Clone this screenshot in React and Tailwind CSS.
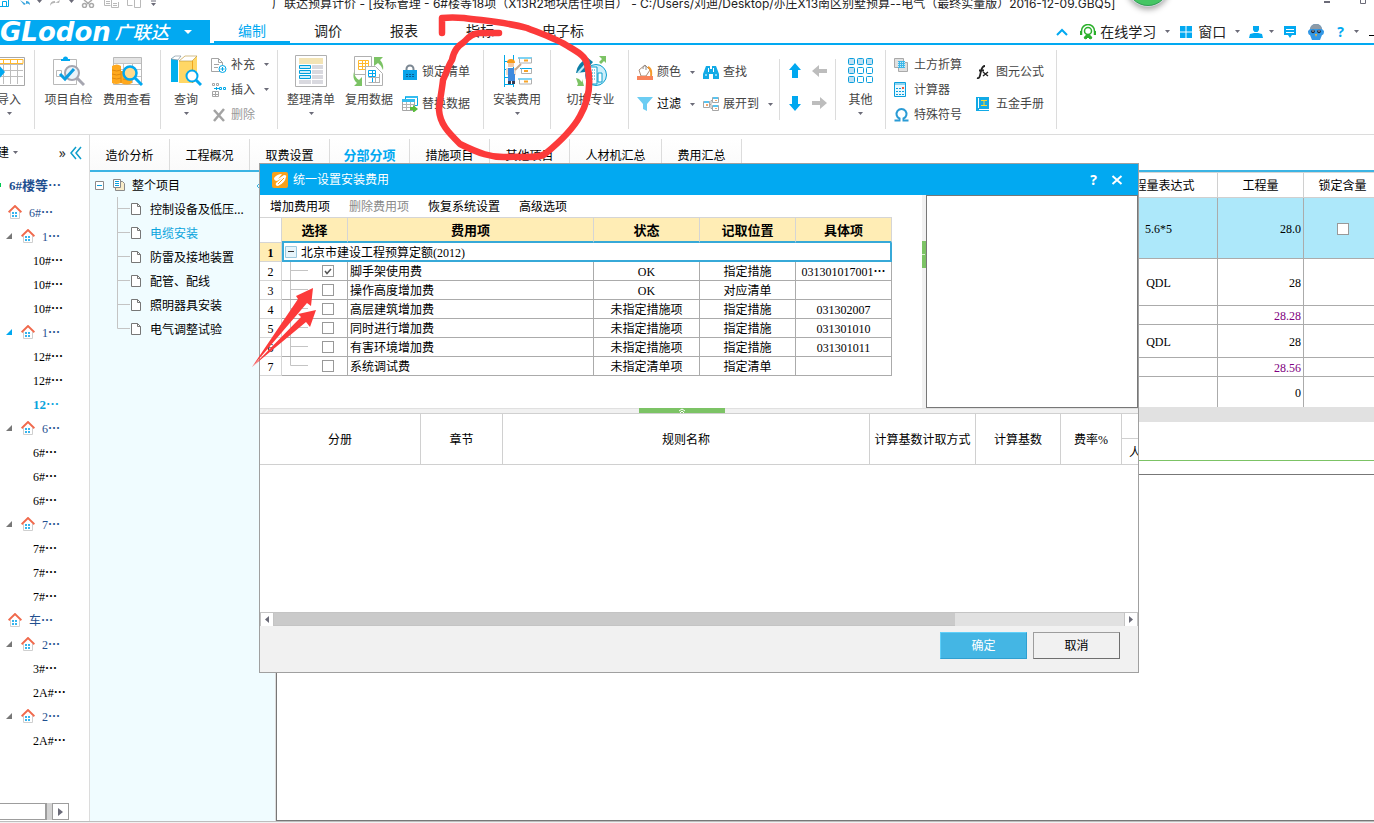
import React, { useState } from 'react';
import clsx from 'clsx';

const SANS = 'font-["Noto_Sans","Noto_Sans_CJK_SC",sans-serif]';
const SONG = 'font-["Liberation_Serif","Noto_Sans_CJK_SC",serif]';

/* ---------- data ---------- */

const MENU_TABS = ['编制', '调价', '报表', '指标', '电子标'];

const PAGE_TABS = ['造价分析', '工程概况', '取费设置', '分部分项', '措施项目', '其他项目', '人材机汇总', '费用汇总'];

const BUILDINGS = [
  { kind: 'root', label: '6#' },
  { kind: 'group', label: '1' },
  { kind: 'leaf', label: '10#' },
  { kind: 'leaf', label: '10#' },
  { kind: 'leaf', label: '10#' },
  { kind: 'group', label: '1', current: true },
  { kind: 'leaf', label: '12#' },
  { kind: 'leaf', label: '12#' },
  { kind: 'leaf', label: '12', current: true },
  { kind: 'group', label: '6' },
  { kind: 'leaf', label: '6#' },
  { kind: 'leaf', label: '6#' },
  { kind: 'leaf', label: '6#' },
  { kind: 'group', label: '7' },
  { kind: 'leaf', label: '7#' },
  { kind: 'leaf', label: '7#' },
  { kind: 'leaf', label: '7#' },
  { kind: 'root', label: '车' },
  { kind: 'group', label: '2' },
  { kind: 'leaf', label: '3#' },
  { kind: 'leaf', label: '2A#' },
  { kind: 'group', label: '2' },
  { kind: 'leaf', label: '2A#' },
];

const SECTIONS = ['控制设备及低压...', '电缆安装', '防雷及接地装置', '配管、配线', '照明器具安装', '电气调整试验'];

const FEES = [
  { name: '脚手架使用费', status: 'OK', place: '指定措施', item: '031301017001', more: true },
  { name: '操作高度增加费', status: 'OK', place: '对应清单', item: '' },
  { name: '高层建筑增加费', status: '未指定措施项', place: '指定措施', item: '031302007' },
  { name: '同时进行增加费', status: '未指定措施项', place: '指定措施', item: '031301010' },
  { name: '有害环境增加费', status: '未指定措施项', place: '指定措施', item: '031301011' },
  { name: '系统调试费', status: '未指定清单项', place: '指定清单', item: '' },
];

const QUANTITIES = [
  { expr: 'QDL', qty: '28', height: 'h-[47px]' },
  { expr: '', qty: '28.28', height: 'h-[19px]', derived: true },
  { expr: 'QDL', qty: '28', height: 'h-[33px]' },
  { expr: '', qty: '28.56', height: 'h-[19px]', derived: true },
  { expr: '', qty: '0', height: 'h-[30px]', last: true },
];

/* ---------- small pieces ---------- */

// full-width ellipsis, sits at mid height only in the CJK face
function Dots() {
  return <span lang="zh-CN" className="font-['Noto_Sans_CJK_SC',sans-serif] font-bold leading-none">…</span>;
}

function Caret({ className }) {
  return (
    <svg className={clsx('h-[3px] w-[5px] shrink-0', className)} viewBox="0 0 5 3" fill="#6b6b78">
      <path d="M0 0h5L2.5 3z" />
    </svg>
  );
}

function Divider({ short }) {
  return <div className={clsx('w-px shrink-0 bg-[#dcdcdc]', short ? 'my-[14px]' : 'my-[5px]')} />;
}

function BigButton({ icon, label, caret, className }) {
  return (
    <button type="button" className={clsx('flex shrink-0 flex-col items-center pt-[10px]', className)}>
      <svg className="h-8 w-8" viewBox="0 0 32 32" fill="none">{icon}</svg>
      <span className="mt-[5px] whitespace-nowrap leading-4">{label}</span>
      {caret && <Caret className="mt-1" />}
    </button>
  );
}

function SmallButton({ icon, label, caret, tall, className }) {
  return (
    <button type="button" className={clsx('flex items-center', tall ? 'h-8' : 'h-[25px]', className)}>
      <svg className="mr-1 h-4 w-4 shrink-0" viewBox="0 0 16 16" fill="none">{icon}</svg>
      <span className="whitespace-nowrap">{label}</span>
      {caret && <Caret className="ml-[9px]" />}
    </button>
  );
}

function House() {
  return (
    <svg className="h-[14px] w-[14px] shrink-0" viewBox="0 0 14 14" fill="none">
      <path d="M2.5 7v6.5h9V7" stroke="#cfcfcf" />
      <path d="M.6 7.200 7 1l6.400 6.200" stroke="#f0694c" strokeWidth="1.900" />
      <path d="M4 7h2v2H4zM7 7h2v2H7zM4 10h2v2H4zM7 10h2v2H7z" fill="#35b4ee" />
    </svg>
  );
}

/* ---------- ribbon icons ---------- */

const ICONS = {
  importGrid: (
    <>
      <path d="M3.5 2.5h28v28h-28z" stroke="#a8a8a8" />
      <path d="M5 9.5h25M5 15.5h25M5 21.5h25M10.5 9v20M17.5 9v20M24.5 9v20" stroke="#bdbdbd" />
      <path d="M5 4.5h25v4H5M10.5 4v5M17.5 4v5M24.5 4v5" stroke="#ffb92e" />
      <path d="M2 14h4v-4l6 7-6 7v-4H2z" fill="#00a8f0" />
    </>
  ),
  check: (
    <>
      <path d="M.5 4.5h23v25H.5z" fill="#fff" stroke="#b9b9b9" />
      <path d="M8 6V4h2a2.5 2.5 0 0 1 5 0h2v2z" fill="#00a8f0" />
      <path d="M3.5 15.5h5v6h-5z" stroke="#b9b9b9" />
      <circle cx="19" cy="18" r="7" fill="#eaf4fa" stroke="#a6a6b0" strokeWidth="2" />
      <path d="m24 23 7 7" stroke="#a6a6b0" strokeWidth="3" />
      <path d="m7 19 5 5 9-10" stroke="#0a9ee2" strokeWidth="3" />
    </>
  ),
  feeView: (
    <>
      <path d="M2.5 2.5h28v27h-28z" fill="#fff" stroke="#b9b9b9" />
      <path d="M3 3h27v5H3z" fill="#e4e4e4" />
      <path d="M3 8.5h27M3 14.500h27M12.5 8v20M21.5 8v20M3 21.5h27" stroke="#c3c3c3" />
      <path d="M1 11q5-3 9 0v5h7q5 1 4 6v6q-5 3-11 0-5 2-9 0z" fill="#ffa91e" />
      <path d="M1 15q5 2 9 0M1 19q5 2 9 0M1 23q5 2 9 0M10 16v12M12 24q4 2 9 0" stroke="#e08a10" />
      <circle cx="19" cy="18" r="6.5" fill="#ffdc8f" stroke="#00a8f0" strokeWidth="2.5" />
      <path d="m24 23 7 7" stroke="#00a8f0" strokeWidth="3" />
    </>
  ),
  query: (
    <>
      <path d="M1 4 5 1h6L8 4v23H1z" fill="#00b0ee" />
      <path d="m1 4 4-3h6L8 5z" fill="#fff" stroke="#7a8790" strokeWidth=".6" />
      <path d="m9 6 6-5h12v24l-4 3H9z" fill="#ffd766" />
      <path d="m9 6 6-5h12l-5 5z" fill="#fff" stroke="#b79138" strokeWidth=".6" />
      <path d="M22.5 6v22" stroke="#f0a51f" />
      <circle cx="22" cy="21" r="5.5" fill="#fff" stroke="#00a8f0" strokeWidth="2" />
      <path d="m26 25 5 5" stroke="#00a8f0" strokeWidth="3" />
    </>
  ),
  tidyList: (
    <>
      <path d="M.5.5h31v31H.5z" fill="#fff" stroke="#b0b0b0" />
      <path d="M4 3h24v6H4z" fill="#f3e4b5" />
      <path d="M4.5 10.5h11v3h-11zM4.5 15.5h11v3h-11zM4.5 20.5h11v3h-11z" fill="#cdeefb" stroke="#00a0dc" />
      <path d="M4 25h12v4H4zM17 10h11v4H17zM17 15h11v4H17zM17 20h11v4H17zM17 25h11v4H17z" fill="#d9d9df" />
    </>
  ),
  reuse: (
    <>
      <path d="M1.5 1.5h17v18h-17z" fill="#fff" stroke="#b0b0b0" />
      <path d="M5.5 5.5h10v9h-10zM9.5 5v9M12.5 5v9M5 8.5h11M5 11.5h11" stroke="#ffb92e" />
      <path d="M12.5 11.5h10l7 7v12h-17z" fill="#fff" stroke="#b0b0b0" />
      <path d="M15.5 15.5h7v6h-7zM19.5 15v12M15 18.5h8" stroke="#00a8f0" />
      <path d="M15.5 22.5h11v5h-11M22.5 22v5M26.500 19v9" stroke="#b0b0b0" />
      <path d="M21 2h9l-3 3q4 4 3 10-2-5-5-7l-4 3zM1 17q1 6 5 8l3-3v9H1l3-3q-5-4-3-11z" fill="#7cc365" />
    </>
  ),
  worker: (
    <>
      <path d="M3.5 0v32M12.5 0v32M3 6.500h9M3 14.500h9M3 22.500h9M3 29.500h9" stroke="#00a8e8" />
      <path d="M17 3h14M19 13.5h12M17 24h14" stroke="#00a8e8" />
      <path d="M18.500 3v5h12V3M20.500 13.500v5h10v-5M18.500 24v5h12v-5" stroke="#b0b0b0" />
      <path d="M23 5.500h4M23 16h4M23 26.500h4" stroke="#f7a428" strokeWidth="2" />
      <path d="M6 8q0-4 4-4t4 4z" fill="#f99b1b" />
      <path d="M7 8h6v4H7z" fill="#f2c9a5" />
      <path d="M5 13h10v7H5z" fill="#f0dccb" />
      <path d="m14 15 6-6" stroke="#c9a88b" strokeWidth="2" />
      <path d="M7 13h6v8H7zM7 19h7v7H7z" fill="#3e8ade" />
      <path d="M7 26h3v3H7zM11 26h3v3h-3z" fill="#333a55" />
    </>
  ),
  switchMajor: (
    <>
      <circle cx="21" cy="20" r="10.5" fill="#cdeffb" stroke="#0a9fce" />
      <path d="M15 12h7v17h-7zM23 18h4v9h-4z" fill="#fff" stroke="#0a9fce" />
      <path d="M17 15h4M17 18h4M17 21h4M17 24h4" stroke="#0a9fce" strokeDasharray="1 1" />
      <path d="M1 18Q2 8 13 3l5 4-8 10z" fill="#0c7ea6" />
      <path d="m3 18 9-10" stroke="#bfeaf8" strokeWidth="2" />
      <path d="M24 1h7v7l-2-2-3 3-2-2 3-3zM1 23l3 1 3 3v-3l2 7H2l1-2z" fill="#7cc365" />
    </>
  ),
  others: (
    <>
      {[4, 13, 22].map((y) =>
        [4, 13, 22].map((x) => (
          <rect
            key={`${x}-${y}`}
            x={x - 0.5}
            y={y - 0.5}
            width="6"
            height="6"
            rx="1"
            fill={y === 4 || x === 4 ? '#bfe0f3' : '#fff'}
            stroke="#0a9fdd"
          />
        ))
      )}
    </>
  ),
  addDoc: (
    <>
      <path d="M.5 1.5h7l4 4v9H.5z" stroke="#a5a5a5" />
      <path d="M7.5 1.5v4h4M3 7.5h5M3 10.5h4" stroke="#a5a5a5" />
      <circle cx="11.500" cy="12" r="3.5" fill="#fff" stroke="#00a8e8" />
      <path d="M11.500 10v4M9.500 12h4" stroke="#00a8e8" />
    </>
  ),
  insert: (
    <>
      <path d="M1.5 1.5h2v2h-2zM5.5 1.5h2v2h-2zM1.5 9.5h6v5h-6zM4.5 9v6M1 12.500h7" stroke="#a5a5a5" />
      <path d="M3 6.5h5M5.500 5v3M8.5 5.500h2v2h-2zM12.500 5.500h2v2h-2z" stroke="#00a8e8" />
    </>
  ),
  remove: <path d="m3 3 10 11M13 2 3 14" stroke="#a3a3a3" strokeWidth="2.5" />,
  lock: (
    <>
      <path d="M4.5 7V5a3.5 3.5 0 0 1 7 0v2" stroke="#7b8792" strokeWidth="2" />
      <path d="M1 6h14v10H1z" fill="#0aa4ea" />
      <path d="M4 10.5h8M4 12.5h8" stroke="#0a5d92" strokeDasharray="2 1" />
    </>
  ),
  replace: (
    <>
      <path d="M3.5.5h12v9h-12z" fill="#fff" stroke="#00a8e8" />
      <path d="M.5 3.5h12v11H.5z" fill="#fff" stroke="#a5a5a5" />
      <path d="M0 3h13v3H0zM4 0h12v2H4z" fill="#35bdf0" />
      <path d="M1 8.5h11M1 11.5h8M4.5 6v8M8.5 6v8" stroke="#b5b5b5" />
      <path d="M8 11h3V9l5 4-5 4v-3H8z" fill="#59bd3a" />
    </>
  ),
  color: (
    <>
      <path d="m2 6 6-5 5 5-4 6H4z" fill="#fff" stroke="#a98c78" />
      <path d="M6 5q0-4 3-3v4" stroke="#8a8a8a" />
      <path d="M11 3q4 2 3 9" stroke="#f59a2c" strokeWidth="2" />
      <path d="M0 12h16v4H0z" fill="#f9845b" />
    </>
  ),
  filter: <path d="M0 1h16l-6 7v7l-4-2V8z" fill="#6ccdf3" />,
  find: (
    <>
      <path d="M3 2h4v3h2V2h4l3 8v5h-6v-5H6v5H0v-5z" fill="#12aae6" />
      <path d="M2 11h2M12 11h2M5.500 4v4M10.500 4v4" stroke="#fff" />
    </>
  ),
  expand: (
    <>
      <path d="M.5 5.5h6v6h-6zM9.5 1.5h6v5h-6zM9.5 9.5h6v5h-6z" fill="#fff" stroke="#a5a5a5" />
      <path d="M1 6h5M10 2h5M10 10h5" stroke="#5bc3ee" strokeWidth="2" />
      <path d="M3 8h2v2H3zM12 4h2v1h-2zM12 12h2v1h-2z" fill="#f7a76b" />
      <path d="M7 8.5h1v-4h2M8 8.5v4h2" stroke="#a5a5a5" />
    </>
  ),
  earth: (
    <>
      <path d="M.5 1.5h9v9h-9z" fill="#e0e0e0" stroke="#a9a9a9" />
      <path d="M4.5 5.5h9v9h-9z" fill="#e0e0e0" stroke="#a9a9a9" />
      <path d="M4 4h7v7H4z" fill="#3fb7e8" />
      <path d="M4 5.5h7M4 7.500h7M4 9.500h7" stroke="#c6ecf9" strokeDasharray="1 1" />
    </>
  ),
  calculator: (
    <>
      <path d="M.5.5h11v14H.5z" fill="#eaf8fe" stroke="#0a9fdd" />
      <path d="M1 1h10v2H1z" fill="#8ed4f0" />
      <path d="M2 6.5h8M2 9.5h8M2 12.5h8" stroke="#0a9fdd" strokeDasharray="2 1" />
      <path d="M8 5h2v2H8z" fill="#f05a3c" />
    </>
  ),
  omega: <path d="M.500 13.500h5v-2a5 5 0 1 1 4 0v2h5" stroke="#2a9bd5" strokeWidth="2" />,
  fx: (
    <>
      <path d="M1 14c3 1 3-3 4-7s2-5 4-5M3 6.500h5" stroke="#222" strokeWidth="1.8" />
      <path d="m7 8 5 4M12 8l-5 4" stroke="#222" strokeWidth="1.4" />
    </>
  ),
  handbook: (
    <>
      <path d="M0 1h13v12H3v1h10v1H0z" fill="#12aae6" />
      <path d="M2.5 2v10" stroke="#fff" />
      <path d="M5 4.5h6M5 9.5h6M8 5v4" stroke="#ffd733" />
    </>
  ),
};

function DirectionButton({ d, label, muted }) {
  return (
    <button type="button" aria-label={label} className="flex h-8 items-center">
      <svg className="h-4 w-4" viewBox="0 0 16 16" fill={muted ? '#bdbdbd' : '#00a8f0'}>
        <path d={d} />
      </svg>
    </button>
  );
}

/* ---------- top of the window ---------- */

function TitleBar() {
  return (
    <div className="relative flex h-5 shrink-0 overflow-hidden">
      <svg className="h-2 w-[272px] shrink-0" viewBox="0 0 272 8" fill="none">
        <path d="M0 6.5h8.5V0M2.5 6V1.5h4V6" stroke="#00a8e8" />
        <path d="M20 0l6 4V1q4 0 4 4-2-3-6 0z" fill="#3aa5dd" />
        <path d="M60 0l-5 3V1q-5 0-5 5 2-4 9-3z" fill="#b5b5b5" />
        <path d="M37 0h5l-2.5 3zM69 0h5l-2.5 3zM151 3h5l-2.5 3z" fill="#6b6b78" />
        <path d="M151 1h5" stroke="#6b6b78" />
        <path d="M84 0l5 4M92 0l-5 4" stroke="#a9a9a9" strokeWidth="1.5" />
        <circle cx="84.5" cy="5.5" r="2" stroke="#a9a9a9" strokeWidth="1.5" />
        <circle cx="91.5" cy="5.5" r="2" stroke="#a9a9a9" strokeWidth="1.5" />
        <path d="M104.5 0v5.5h6M111.5 0v7.5h7V2M106 1.5h4M106 3.5h4M113 3.5h4M113 5.5h4" stroke="#b9b9b9" />
        <path d="M127.5 0v5.5h5M134.5 0v7.5h6V0" stroke="#b9b9b9" />
      </svg>
      <div className="-mt-[5px] whitespace-nowrap font-['Inter','Noto_Sans_CJK_SC',sans-serif] text-xs leading-[18px] text-[#222]">
        广联达预算计价 - [投标管理 - 6#楼等18项（X13R2地块居住项目） - C:/Users/刘迪/Desktop/亦庄X13南区别墅预算--电气（最终实量版）2016-12-09.GBQ5]
      </div>
      <div className="absolute -top-9 left-[1127px] h-[42px] w-[42px] rounded-full border border-[#2f9e52] bg-[#45c664] ring-1 ring-gray-300 shadow-[0_3px_6px_rgba(0,0,0,0.4)]" />
      <svg className="ml-auto h-2 w-[50px] shrink-0" viewBox="0 0 50 8" fill="none">
        <path d="M0 2h6" stroke="#6b6b78" strokeWidth="2" />
        <path d="M36.5 0v3.5h5V0" stroke="#6b6b78" />
      </svg>
    </div>
  );
}

function MenuBar() {
  return (
    <div className="flex h-[25px] shrink-0 border-b-2 border-[#02a9f1]">
      <button type="button" className="flex w-[210px] shrink-0 items-center bg-[#02a9f1] text-white">
        <span className="font-['DejaVu_Sans',sans-serif] text-[26px] font-bold italic leading-[22px]">GLodon</span>
        <span className="ml-1 whitespace-nowrap text-lg font-medium italic leading-[22px]">广联达</span>
        <svg className="ml-auto mr-[18px] h-1 w-2" viewBox="0 0 8 4" fill="#fff"><path d="M0 0h8L4 4z" /></svg>
      </button>
      <nav className="ml-1 flex text-sm leading-5">
        {MENU_TABS.map((tab, i) => (
          <button
            key={tab}
            type="button"
            className={clsx(
              'border-b-2',
              i === 4 ? 'w-[90px]' : 'w-[76px]',
              i === 0 ? 'border-[#02a9f1] text-[#02a9f1]' : 'border-transparent text-[#222]'
            )}
          >
            {tab}
          </button>
        ))}
      </nav>
      <div className="ml-auto flex shrink-0 items-center text-sm text-[#222]">
        <button type="button" aria-label="收起功能区">
          <svg className="h-2 w-3" viewBox="0 0 12 8" fill="none"><path d="m1 7 5-5 5 5" stroke="#02a9f1" strokeWidth="2" /></svg>
        </button>
        <button type="button" className="ml-3 flex items-center">
          <svg className="mr-1 h-4 w-4" viewBox="0 0 16 16" fill="none" stroke="#2bb02b">
            <path d="M1.500 11V7a6.500 6.500 0 0 1 13 0v4" strokeWidth="1.5" />
            <path d="M1 7v4M15 7v4" strokeWidth="2" />
            <circle cx="8" cy="7" r="3.5" strokeWidth="1.5" />
            <path d="M4 14q1-3 4-3t4 3l-2 1-2-2-2 2z" fill="#2bb02b" />
          </svg>
          在线学习
          <Caret className="ml-[9px]" />
        </button>
        <button type="button" className="ml-[10px] flex items-center">
          <svg className="mr-[6px] h-3 w-3" viewBox="0 0 12 12" fill="#02a9f1"><path d="M0 0h5.500v5.500H0zM6.500 0H12v5.500H6.500zM0 6.500h5.500V12H0zM6.500 6.500H12V12H6.500z" /></svg>
          窗口
          <Caret className="ml-[9px]" />
        </button>
        <button type="button" aria-label="用户" className="ml-[9px] flex items-center">
          <svg className="h-3 w-[14px]" viewBox="0 0 14 12" fill="#02a9f1"><path d="M4 0h6v4L8.500 6h-3L4 4zM1 8l4-1h4l4 1 1 4H0z" /></svg>
          <Caret className="ml-[6px]" />
        </button>
        <button type="button" aria-label="消息" className="ml-[10px]">
          <svg className="h-[14px] w-3" viewBox="0 0 12 14" fill="none"><path d="M0 1h12v9H8l-2 3-2-3H0z" fill="#02a9f1" /><path d="M2 4.500h8M2 7.500h8" stroke="#fff" /></svg>
        </button>
        <button type="button" aria-label="助手" className="ml-3">
          <svg className="h-[18px] w-4" viewBox="0 0 16 18" fill="none">
            <path d="M2 6Q3 1 8 1t6 5l2 2q0 4-2 4l-2 5H4l-2-5q-2 0-2-4z" fill="#3398e6" />
            <path d="M2 6q1-5 6-5t6 5z" fill="#8d9aa6" />
            <circle cx="5" cy="8.500" r="1.800" fill="#1b2433" />
            <circle cx="11" cy="8.500" r="1.800" fill="#1b2433" />
            <circle cx="5" cy="8" r=".7" fill="#fff" />
            <circle cx="11" cy="8" r=".7" fill="#fff" />
            <path d="M7 11h2l-1 3z" fill="#ffb92e" />
          </svg>
        </button>
        <button type="button" aria-label="帮助" className="ml-[13px] flex items-center font-bold text-[#02a9f1]">
          ?
          <Caret className="ml-[10px]" />
        </button>
        <div className="ml-[10px] mt-2 h-px w-[5px] bg-black" />
      </div>
    </div>
  );
}

function Ribbon() {
  return (
    <div className="flex h-[90px] shrink-0 items-stretch overflow-hidden border-b border-[#dcdcdc] text-xs text-[#444]">
      <BigButton className="-ml-4 w-[50px]" icon={ICONS.importGrid} label="导入" caret />
      <Divider />
      <div className="flex shrink-0 px-1">
        <BigButton className="w-[59px]" icon={ICONS.check} label="项目自检" />
        <BigButton className="w-[58px]" icon={ICONS.feeView} label="费用查看" />
      </div>
      <Divider />
      <BigButton className="w-[50px]" icon={ICONS.query} label="查询" caret />
      <div className="w-[66px] shrink-0 pt-[7px]">
        <SmallButton icon={ICONS.addDoc} label="补充" caret />
        <SmallButton icon={ICONS.insert} label="插入" caret />
        <SmallButton icon={ICONS.remove} label="删除" className="text-[#999]" />
      </div>
      <Divider />
      <BigButton className="ml-1 w-[58px]" icon={ICONS.tidyList} label="整理清单" caret />
      <BigButton className="w-[58px]" icon={ICONS.reuse} label="复用数据" />
      <div className="ml-1 w-[81px] shrink-0 pt-[11px]">
        <SmallButton tall icon={ICONS.lock} label="锁定清单" />
        <SmallButton tall icon={ICONS.replace} label="替换数据" />
      </div>
      <Divider />
      <BigButton className="w-[66px]" icon={ICONS.worker} label="安装费用" caret />
      <Divider />
      <BigButton className="w-[77px] pl-[2px]" icon={ICONS.switchMajor} label="切换专业" />
      <Divider />
      <div className="ml-2 w-[66px] shrink-0 pt-[11px]">
        <SmallButton tall icon={ICONS.color} label="颜色" caret />
        <SmallButton tall icon={ICONS.filter} label="过滤" caret className="text-black" />
      </div>
      <div className="w-[76px] shrink-0 pt-[11px]">
        <SmallButton tall icon={ICONS.find} label="查找" />
        <SmallButton tall icon={ICONS.expand} label="展开到" caret />
      </div>
      <Divider short />
      <div className="grid shrink-0 grid-cols-2 content-start gap-x-[9px] px-[7px] pt-[10px]">
        <DirectionButton label="上移" d="M8 0l6 7h-3v8H5V7H2z" />
        <DirectionButton label="左移" muted d="M0 8l7-6v4h8v4H7v4z" />
        <DirectionButton label="下移" d="M8 16l6-7h-3V1H5v8H2z" />
        <DirectionButton label="右移" muted d="M15 8L8 2v4H0v4h8v4z" />
      </div>
      <Divider short />
      <BigButton className="w-[49px]" icon={ICONS.others} label="其他" caret />
      <Divider />
      <div className="ml-2 w-[82px] shrink-0 pt-[7px]">
        <SmallButton icon={ICONS.earth} label="土方折算" />
        <SmallButton icon={ICONS.calculator} label="计算器" />
        <SmallButton icon={ICONS.omega} label="特殊符号" />
      </div>
      <div className="w-[80px] shrink-0 pt-[11px]">
        <SmallButton tall icon={ICONS.fx} label="图元公式" />
        <SmallButton tall icon={ICONS.handbook} label="五金手册" />
      </div>
      <Divider />
    </div>
  );
}

/* ---------- left side ---------- */

function Sidebar() {
  return (
    <aside className="flex w-[90px] shrink-0 flex-col overflow-hidden border-r border-[#dcdcdc]">
      <div className="flex h-[35px] shrink-0 items-center text-xs">
        <button type="button" className="-ml-[3px] flex items-center">建<Caret className="ml-1" /></button>
        <span className="ml-auto text-sm text-[#333]">»</span>
        <button type="button" aria-label="收起" className="ml-1 mr-[7px]">
          <svg className="h-[14px] w-3" viewBox="0 0 12 14" fill="none"><path d="M6 1 1 7l5 6M11 1 6 7l5 6" stroke="#0e9dcb" strokeWidth="1.5" /></svg>
        </button>
      </div>
      <div className={clsx('flex flex-1 flex-col text-xs', SONG)}>
        <div className="flex h-[30px] items-center">
          <span className="h-1 w-px bg-green-500" />
          <span className="ml-2 whitespace-nowrap pt-[2px] text-[13px] font-bold text-[#1f4f8f]">6#楼等<Dots /></span>
        </div>
        {BUILDINGS.map((node, i) => (
          <div key={i} className="flex h-6 items-center whitespace-nowrap">
            {node.kind === 'root' && (
              <span className="ml-2 flex items-center text-[#1f4f8f]">
                <House />
                <span className="ml-[7px] pt-[2px]">{node.label}<Dots /></span>
              </span>
            )}
            {node.kind === 'group' && (
              <span className="ml-[6px] flex items-center text-[#1f4f8f]">
                <svg className="mr-[9px] h-[6px] w-[6px]" viewBox="0 0 6 6" fill={node.current ? '#00a8f0' : '#777'}><path d="M6 0v6H0z" /></svg>
                <House />
                <span className="ml-[7px] pt-[2px]">{node.label}<Dots /></span>
              </span>
            )}
            {node.kind === 'leaf' && (
              <span className={clsx('ml-[33px] pt-[2px]', node.current && 'text-[13px] font-bold text-[#0aa4dd]')}>
                {node.label}
                <Dots />
              </span>
            )}
          </div>
        ))}
      </div>
      <div className="mb-px flex h-[17px] w-[69px] bg-[#d3d3d3]">
        <div className="w-[47px] border border-l-0 border-r-2 border-[#9d9d9d] bg-white" />
        <button type="button" aria-label="向右滚动" className="ml-auto flex w-[17px] items-center justify-center border border-[#9d9d9d] bg-white">
          <svg className="h-2 w-[5px]" viewBox="0 0 5 8" fill="#6b6b78"><path d="M0 0v8l5-4z" /></svg>
        </button>
      </div>
    </aside>
  );
}

function SectionTree() {
  return (
    <div className="relative w-[186px] shrink-0 border-r border-[#dcdcdc] bg-[#f0fcff] pt-px text-xs">
      <div className="flex h-6 items-center">
        <svg className="ml-[5px] h-[9px] w-[9px]" viewBox="0 0 9 9" fill="none"><path d="M.5.5h8v8h-8z" fill="#fff" stroke="#8a8a8a" /><path d="M2 4.500h5" stroke="#0a9fdd" /></svg>
        <svg className="ml-[9px] h-3 w-3" viewBox="0 0 12 12" fill="none">
          <path d="M8 2.500h1.500l2 2v7h-9V9" fill="#f8ecc8" stroke="#8a8a8a" />
          <path d="M.5.5h7v8h-7z" fill="#fff" stroke="#8a8a8a" />
          <path d="M2 2.500h4M2 4.500h4M2 6.500h4" stroke="#0a9fdd" />
        </svg>
        <span className="ml-[7px] pt-[2px]">整个项目</span>
      </div>
      <ul>
        {SECTIONS.map((name, i) => (
          <li key={name} className="flex h-6 items-center">
            <svg className="ml-[27px] h-6 w-[14px]" viewBox="0 0 14 24" fill="none">
              <path d={i === SECTIONS.length - 1 ? 'M.5 0v11.500H13' : 'M.5 0v24M0 11.500h13'} stroke="#c4c4c4" />
            </svg>
            <svg className="h-3 w-[10px]" viewBox="0 0 10 12" fill="none"><path d="M.5.5h6l3 3v8h-9z" fill="#fff" stroke="#777" /><path d="M6.5.5v3h3" stroke="#777" /></svg>
            <a href="#" className={clsx('ml-[9px] whitespace-nowrap pt-[2px]', i === 1 && 'text-[#0aa4dd]')}>{name}</a>
          </li>
        ))}
      </ul>
      <svg className="absolute right-3 top-2.5 h-2 w-[7px]" viewBox="0 0 7 8" fill="none"><path d="M4 1 1 4l3 3" stroke="#35b4e4" /></svg>
    </div>
  );
}

/* ---------- main sheet ---------- */

function QuantitySheet() {
  return (
    <div className={clsx('-mr-2 text-xs', SONG)}>
      <table className="w-full table-fixed border-separate border-spacing-0 border-t border-[#d5d5d5]">
        <colgroup>
          <col />
          <col className="w-[118px]" />
          <col className="w-[86px]" />
          <col className="w-[78px]" />
        </colgroup>
        <thead>
          <tr className="h-[25px] *:border-b *:border-r *:border-[#d0d0d0] *:p-0 *:pt-[2px] *:font-normal">
            <th />
            <th>工程量表达式</th>
            <th>工程量</th>
            <th>锁定含量</th>
          </tr>
        </thead>
        <tbody>
          <tr className="h-[61px] bg-[#ade8fa] *:border-b *:border-r *:border-[#ababab] *:p-0 *:pt-[2px]">
            <td />
            <td className="text-center">5.6*5</td>
            <td className="pr-[2px]! text-right">28.0</td>
            <td className="p-0! text-center">
              <input type="checkbox" aria-label="锁定含量" className="h-3 w-3 appearance-none border border-[#999] bg-white align-middle" />
            </td>
          </tr>
          {QUANTITIES.map((row, i) => (
            <tr
              key={i}
              className={clsx(row.height, '*:border-r *:border-[#ababab] *:p-0 *:pt-[2px] *:leading-4', !row.last && '*:border-b')}
            >
              <td />
              <td className="text-center">{row.expr}</td>
              <td className={clsx('pr-[2px]! text-right', row.derived && 'text-[#800080]')}>{row.qty}</td>
              <td />
            </tr>
          ))}
        </tbody>
      </table>
      <div className="h-[15px] bg-[#e1e1e1]" />
      <div className="h-[39px] border-b border-[#7cc365]" />
    </div>
  );
}

/* ---------- dialog ---------- */

function FeeTable() {
  const [checked, setChecked] = useState([true, false, false, false, false, false]);
  const toggle = (i) => setChecked(checked.map((v, n) => (n === i ? !v : v)));

  return (
    <table className="w-[632px] table-fixed border-separate border-spacing-0 leading-4">
      <colgroup>
        <col className="w-[22px]" />
        <col className="w-[66px]" />
        <col className="w-[246px]" />
        <col className="w-[106px]" />
        <col className="w-[96px]" />
        <col className="w-[96px]" />
      </colgroup>
      <thead>
        <tr className="h-[26px] text-[13px] *:border-r *:border-t *:border-[#d5d5d5] *:p-0 *:pt-[2px]">
          <th className="border-b" />
          {['选择', '费用项', '状态', '记取位置', '具体项'].map((h) => (
            <th key={h} className="border-b-2 border-b-[#37a9d8]! bg-[#ffedb5] font-bold">{h}</th>
          ))}
        </tr>
      </thead>
      <tbody>
        <tr className="h-[19px]">
          <td className="border-b border-r border-[#d5d5d5] bg-[#ffedb5] p-0 pt-[2px] text-center font-bold">1</td>
          <td colSpan={5} className="border-2 border-t-0 border-[#37a9d8] p-0">
            <div className="flex h-[17px] items-center">
              <svg className="ml-px h-3 w-3" viewBox="0 0 12 12" fill="none"><path d="M.5.5h11v11H.5z" fill="#e6f4fb" stroke="#9cc8de" /><path d="M3 5.500h6" stroke="#333" /></svg>
              <span className="ml-1 pt-[2px]">北京市建设工程预算定额(2012)</span>
            </div>
          </td>
        </tr>
        {FEES.map((fee, i) => (
          <tr key={fee.name} className="h-[19px] *:border-b *:border-r *:border-[#ababab] *:p-0 *:pt-[2px]">
            <td className="border-[#d5d5d5]! text-center">{i + 2}</td>
            <td className="pt-0!">
              <div className="flex h-[18px] items-center">
                <svg className="h-[18px] w-10 shrink-0" viewBox="0 0 40 18" fill="none">
                  <path d={i === FEES.length - 1 ? 'M8.5 0v8.5H26' : 'M8.5 0v18M8 8.5h18'} stroke="#c4c4c4" />
                </svg>
                <label className="relative flex">
                  <input
                    type="checkbox"
                    aria-label={fee.name}
                    checked={checked[i]}
                    onChange={() => toggle(i)}
                    className="h-3 w-3 appearance-none border border-[#999] bg-white"
                  />
                  {checked[i] && (
                    <svg className="pointer-events-none absolute inset-0 h-3 w-3" viewBox="0 0 12 12" fill="none"><path d="m3 6 2 2.500L9 4" stroke="#555" strokeWidth="1.5" /></svg>
                  )}
                </label>
              </div>
            </td>
            <td className="pl-[2px]!">{fee.name}</td>
            <td className="text-center">{fee.status}</td>
            <td className="text-center">{fee.place}</td>
            <td className="whitespace-nowrap text-center">{fee.item}{fee.more && <Dots />}</td>
          </tr>
        ))}
      </tbody>
    </table>
  );
}

function RuleTable() {
  return (
    <table className="w-full table-fixed border-separate border-spacing-0 border-t border-[#d0d0d0]">
      <colgroup>
        <col className="w-[161px]" />
        <col className="w-[82px]" />
        <col />
        <col className="w-[106px]" />
        <col className="w-[85px]" />
        <col className="w-[61px]" />
        <col className="w-4" />
      </colgroup>
      <thead className="*:*:border-b *:*:border-[#d0d0d0] *:*:p-0 *:*:pt-[2px] *:*:font-normal">
        <tr className="h-[25px]">
          {['分册', '章节', '规则名称', '计算基数计取方式', '计算基数', '费率%'].map((h) => (
            <th key={h} rowSpan={2} className="whitespace-nowrap border-r">{h}</th>
          ))}
          <th />
        </tr>
        <tr className="h-[26px]">
          <th className="overflow-hidden whitespace-nowrap pl-[7px]! text-left">人</th>
        </tr>
      </thead>
    </table>
  );
}

function InstallFeeDialog() {
  return (
    <div
      role="dialog"
      aria-label="统一设置安装费用"
      className={clsx('absolute left-[259px] top-[163px] flex h-[510px] w-[880px] flex-col border border-[#a0a0a0] bg-white text-xs', SONG)}
    >
      <div className="flex h-[31px] shrink-0 items-center bg-[#02a9f1] text-white">
        <svg className="ml-3 h-4 w-4" viewBox="0 0 16 16" fill="none">
          <rect width="16" height="16" rx="2" fill="#f9a11b" />
          <path d="M2 6q3-4 8-4L6 7l6-4q3 0 2 2-1 6-8 9-3 0-2-3l6-5-5 3q-3 0-3-3z" fill="#fff" />
          <path d="m6 12 6-6" stroke="#f9a11b" />
        </svg>
        <h2 className="ml-[5px]">统一设置安装费用</h2>
        <button type="button" aria-label="帮助" className={clsx('ml-auto text-sm font-bold', SANS)}>?</button>
        <button type="button" aria-label="关闭" className="ml-[14px] mr-[15px]">
          <svg className="h-[10px] w-3" viewBox="0 0 12 10" fill="none"><path d="m1.5 1 9 8M10.500 1l-9 8" stroke="#fff" strokeWidth="2" /></svg>
        </button>
      </div>

      <div className="flex h-[213px] shrink-0">
        <div className="min-w-0 flex-1">
          <div className="flex h-[22px] items-center gap-[19px] pl-[10px] pt-[2px]">
            <button type="button">增加费用项</button>
            <button type="button" disabled className="text-[#8a8a8a]">删除费用项</button>
            <button type="button">恢复系统设置</button>
            <button type="button">高级选项</button>
          </div>
          <FeeTable />
        </div>
        <div className="w-1 bg-[#f1f1f1] pt-[46px]">
          <div className="flex h-[27px] items-center bg-[#7cc365]">
            <svg className="h-[3px] w-1" viewBox="0 0 4 3" fill="#d8f0cf"><path d="M0 1h3v1H0z" /></svg>
          </div>
        </div>
        <div className="w-[212px] border border-[#777]" />
      </div>

      <div className="flex h-[5px] shrink-0 justify-center border-t border-[#e0e0e0] bg-[#f1f1f1] pr-[34px]">
        <div className="-mt-px flex w-[86px] justify-center bg-[#7cc365]">
          <svg className="h-[5px] w-2" viewBox="0 0 8 5" fill="none"><path d="m1 3 3-2 3 2M2 5l2-2 2 2" stroke="#fff" /></svg>
        </div>
      </div>

      <RuleTable />

      <div className="mt-auto flex h-[14px] shrink-0 border-t border-[#c4c4c4] bg-[#e1e1e1]">
        <button type="button" aria-label="向左滚动" className="flex w-[14px] items-center justify-center border-x border-[#c4c4c4] bg-white">
          <svg className="h-[7px] w-1" viewBox="0 0 4 7" fill="#6b6b78"><path d="M4 0v7L0 3.500z" /></svg>
        </button>
        <div className="w-[681px] border-b border-[#c4c4c4] bg-[#cacaca]" />
        <button type="button" aria-label="向右滚动" className="ml-auto flex w-[14px] items-center justify-center border-x border-[#c4c4c4] bg-white">
          <svg className="h-[7px] w-1" viewBox="0 0 4 7" fill="#6b6b78"><path d="M0 0v7l4-3.500z" /></svg>
        </button>
      </div>

      <div className="flex h-[46px] shrink-0 justify-end gap-[6px] bg-[#f1f1f1] pr-[18px] pt-[6px]">
        <button type="button" className="h-[27px] w-[87px] border border-b-[#2f9fd0] border-l-[#5fd0fa] border-r-[#2f9fd0] border-t-[#5fd0fa] bg-[#44b6e4] text-white">
          确定
        </button>
        <button type="button" className="h-[27px] w-[87px] border border-b-[#6f6f6f] border-l-[#9d9d9d] border-r-[#6f6f6f] border-t-[#9d9d9d]">
          取消
        </button>
      </div>
    </div>
  );
}

/* red pen marks drawn over the window */
function PenMarks() {
  return (
    <svg className="pointer-events-none absolute left-0 top-0 h-[400px] w-[640px]" viewBox="0 0 640 400" fill="none">
      <path
        d="M442 33V18Q452 17 464 18C486 21 506 22 527 28C542 34 556 39 566 45C576 51 586 56 587 64C591 80 590 98 580 116C573 129 556 145 545 154C538 159 520 156 507 157C492 158 478 153 460 144C448 132 440 124 439 110C440 98 442 90 443 80C447 72 448 66 452 60C454 50 458 46 464 42C469 36 474 33 480 33H499"
        stroke="#fc3a3a"
        strokeWidth="6.5"
        strokeLinecap="round"
        strokeLinejoin="round"
      />
      <path d="M252 367 298 299 296 296 313 288 311 306 307 303z" fill="#fc3a3a" />
      <path d="M252 367 301 317 298 314 316 310 310 327 306 322z" fill="#fc3a3a" />
    </svg>
  );
}

export default function App() {
  return (
    <div className={clsx('relative flex h-screen flex-col overflow-hidden bg-white text-black', SANS)}>
      <TitleBar />
      <MenuBar />
      <Ribbon />
      <div className="flex min-h-0 flex-1">
        <Sidebar />
        <div className="flex min-w-0 flex-1 flex-col">
          <nav className={clsx('flex h-[37px] shrink-0 border-b-2 border-[#3bb4e4] pt-1 text-xs', SONG)}>
            {PAGE_TABS.map((tab, i) => (
              <button
                key={tab}
                type="button"
                className={clsx(
                  'border-r border-[#dcdcdc] bg-linear-to-b from-white to-[#fafafa] pt-[2px]',
                  i === 6 ? 'w-[92px]' : 'w-20',
                  i === 3 && 'text-[13px] font-bold text-[#02a9f1]'
                )}
              >
                {tab}
              </button>
            ))}
          </nav>
          <div className="flex min-h-0 flex-1">
            <SectionTree />
            <main className="flex min-w-0 flex-1 flex-col overflow-hidden">
              <QuantitySheet />
              <div className="mt-[13px] flex-1 border-y border-l border-[#777]" />
            </main>
          </div>
        </div>
      </div>
      <div className="h-[2px] shrink-0 border-t border-[#bdbdbd] bg-[#f1f1f1]" />
      <InstallFeeDialog />
      <PenMarks />
    </div>
  );
}
